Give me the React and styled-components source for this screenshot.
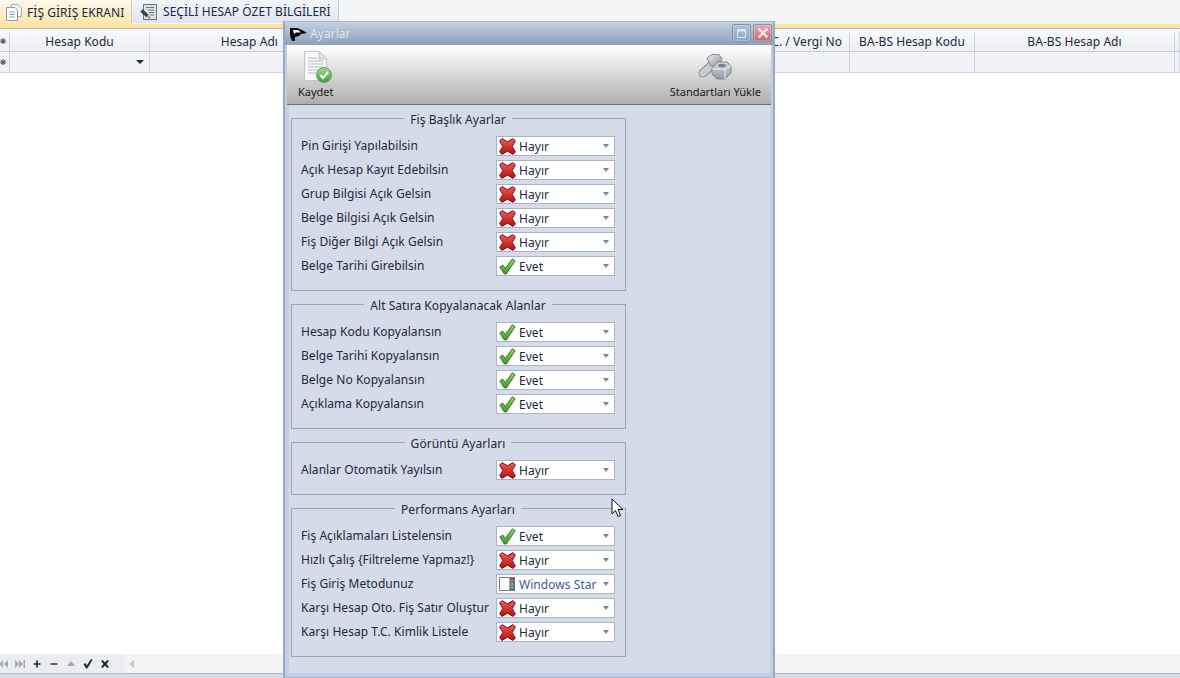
import React from 'react';
import styled, { createGlobalStyle } from 'styled-components';

const GlobalStyle = createGlobalStyle`
  html, body {
    margin: 0;
    padding: 0;
    height: 100%;
    overflow: hidden;
    background: #fff;
  }
  #root {
    height: 100%;
  }
  * {
    box-sizing: border-box;
  }
`;

const Screen = styled.div`
  position: relative;
  width: 1180px;
  height: 678px;
  display: flex;
  flex-direction: column;
  overflow: hidden;
  font-family: "Noto Sans", "Liberation Sans", sans-serif;
  font-size: 12px;
  letter-spacing: 0.05px;
  color: #20293c;
`;

const TabStrip = styled.div`
  display: flex;
  flex: none;
  height: 24px;
  background: #f4f5f7;
`;

const Tab = styled.div`
  display: flex;
  align-items: center;
  gap: 5px;
  height: ${({ $active }) => ($active ? '24px' : '23px')};
  width: ${({ $width }) => $width}px;
  padding-left: ${({ $active }) => ($active ? '6px' : '8px')};
  border-right: 1px solid #c3cbda;
  background: ${({ $active }) =>
    $active ? 'linear-gradient(#fcf9ee, #fde6aa)' : 'linear-gradient(#f3f5f9, #dfe4ee)'};
`;

const YellowBand = styled.div`
  flex: none;
  height: 5px;
  background: #fde39f;
  border-bottom: 1px solid #aeb6c6;
`;

const HeaderRow = styled.div`
  display: flex;
  flex: none;
  height: 23px;
  padding-top: 2px;
  background: linear-gradient(#f8f9fb, #eceef3);
  border-bottom: 1px solid #c6cad6;
`;

const FilterRow = styled.div`
  display: flex;
  flex: none;
  height: 21px;
  background: #f0f2f7;
  border-bottom: 1px solid #d1d5df;
`;

const Cell = styled.div`
  position: relative;
  flex: ${({ $width }) => ($width ? `0 0 ${$width}px` : '1')};
  display: flex;
  align-items: center;
  justify-content: ${({ $pad }) => ($pad ? 'flex-end' : 'center')};
  padding-right: ${({ $pad }) => $pad || 0}px;
  border-right: 1px solid #d1d5df;
  overflow: hidden;
  white-space: nowrap;
`;

const Marker = styled.span`
  margin-right: 3px;
  font-family: "DejaVu Sans", sans-serif;
  font-size: 8px;
  color: #333;
`;

const Caret = styled.span`
  position: absolute;
  right: 5px;
  top: 8px;
  border-left: 4px solid transparent;
  border-right: 4px solid transparent;
  border-top: 4px solid #20293c;
`;

const GridBody = styled.div`
  flex: 1;
  background: #fff;
`;

const Navigator = styled.div`
  display: flex;
  flex: none;
  align-items: center;
  height: 19px;
  background: #f3f4f6;
`;

const NavButtons = styled.div`
  width: 124px;
  height: 100%;
  display: flex;
  align-items: center;
  background: #ebedf1;
`;

const NavButton = styled.svg`
  flex: none;
  margin-right: 7px;
  &:first-child {
    margin-left: -1px;
  }
`;

const ScrollArrow = styled.span`
  margin-left: 5px;
  border-top: 4px solid transparent;
  border-bottom: 4px solid transparent;
  border-right: 5px solid #c8ccd3;
`;

const BottomBar = styled.div`
  flex: none;
  height: 5px;
  background: #d8dce5;
  border-top: 1px solid #aeb6c6;
`;

const Window = styled.div`
  position: absolute;
  left: 283px;
  top: 21px;
  width: 492px;
  height: 657px;
  display: flex;
  flex-direction: column;
  padding: 0 2px 3px;
  background: #c2cfe1;
  border: 1px solid #a5b6cd;
  border-left: 2px solid #98a9c2;
  border-right: 2px solid #98a9c2;
`;

const TitleBar = styled.div`
  flex: none;
  height: 23px;
  margin: 0 -2px;
  padding: 0 1px 0 5px;
  display: flex;
  align-items: center;
  gap: 2px;
  background: linear-gradient(#c3d0e1, #8da0ba);
`;

const TitleText = styled.span`
  flex: 1;
  margin-left: 1px;
  color: #dfe5ee;
`;

const WinButton = styled.span`
  width: 19px;
  height: 18px;
  margin-top: -1px;
  display: flex;
  align-items: center;
  justify-content: center;
  border: 1px solid #7f94b1;
  border-radius: 2px;
  box-shadow: inset 0 0 0 1px rgba(255, 255, 255, 0.25);
  background: ${({ $close }) =>
    $close ? 'linear-gradient(#e4a9ab, #c9646a)' : 'linear-gradient(#b0c1d7, #8fa5c3)'};
`;

const Toolbar = styled.div`
  flex: none;
  height: 60px;
  padding: 0 10px 0 11px;
  display: flex;
  justify-content: space-between;
  font-size: 11px;
  letter-spacing: 0;
  background: linear-gradient(#ffffff, #ececec 25%, #aeaeae);
  border-bottom: 1px solid #6f6f6f;
`;

const ToolButton = styled.div`
  display: flex;
  flex-direction: column;
  align-items: center;
  justify-content: flex-end;
  gap: 1px;
  padding-bottom: 5px;
  color: #15181f;
`;

const Panel = styled.div`
  flex: 1;
  min-height: 0;
  padding: 5px 0 0 2px;
  display: flex;
  flex-direction: column;
  gap: 5px;
  background: #d5dbe9;
  border: 1px solid #c6cfdf;
  border-left-width: 2px;
  border-top: none;
`;

const Group = styled.fieldset`
  flex: none;
  width: 335px;
  min-width: 0;
  margin: 0;
  padding: 8px 10px 12px 9px;
  border: 1px solid #9aa5b8;
`;

const GroupTitle = styled.legend`
  margin: 0 auto;
  padding: 0 6px;
  height: 16px;
  line-height: 19px;
`;

const Row = styled.div`
  display: flex;
  align-items: center;
  height: 24px;
  white-space: nowrap;
`;

const Label = styled.span`
  flex: 0 0 195px;
  line-height: 20px;
`;

const Combo = styled.div`
  width: 119px;
  height: 20px;
  padding: 0 5px 0 2px;
  display: flex;
  align-items: center;
  gap: 3px;
  background: #fff;
  border: 1px solid #a9b3c4;
`;

const ComboText = styled.span`
  flex: 1;
  overflow: hidden;
  color: ${({ $blue }) => ($blue ? '#3a5a9c' : '#20293c')};
`;

const ComboArrow = styled.span`
  border-left: 3.5px solid transparent;
  border-right: 3.5px solid transparent;
  border-top: 4px solid #7b8597;
`;

const Pointer = styled.svg`
  position: absolute;
  left: 611px;
  top: 498px;
`;

const CrossIcon = () => (
  <svg width="17" height="17" viewBox="0 0 17 17">
    <defs>
      <linearGradient id="cr" x1="0" y1="0" x2="0" y2="1">
        <stop offset="0" stopColor="#ee5f5a" />
        <stop offset="1" stopColor="#b50d10" />
      </linearGradient>
    </defs>
    <path
      d="M3 .6 8.500 3.800 14 .6 16.400 3 13.200 8.500 16.400 14 14 16.400 8.500 13.200 3 16.400 .6 14 3.800 8.500 .6 3Z"
      fill="url(#cr)"
      stroke="#7e0d0f"
      strokeWidth="1"
    />
  </svg>
);

const CheckIcon = () => (
  <svg width="17" height="17" viewBox="0 0 17 17">
    <defs>
      <linearGradient id="ck" x1="0" y1="0" x2="0" y2="1">
        <stop offset="0" stopColor="#8ed365" />
        <stop offset="1" stopColor="#3d9a26" />
      </linearGradient>
    </defs>
    <path
      d="M.8 9 3.700 7 6.300 10.300 13.300.8 16.200 2.800 7.300 16H5.300Z"
      fill="url(#ck)"
      stroke="#2c6e22"
      strokeWidth="0.9"
    />
  </svg>
);

const LayoutIcon = () => (
  <svg width="17" height="16" viewBox="0 0 17 16">
    <rect x="0.5" y="1.500" width="15" height="13" fill="#fff" stroke="#77818f" />
    <rect x="10.500" y="2" width="5" height="12" fill="#4b5666" />
    <rect x="11.500" y="3" width="3" height="3" fill="#d8694f" />
    <rect x="11.500" y="6.500" width="3" height="3" fill="#7cc35a" />
    <rect x="11.500" y="10" width="3" height="3" fill="#63a9c9" />
  </svg>
);

const PageIcon = () => (
  <svg width="16" height="17" viewBox="0 0 16 17">
    <path d="M5.500.5H12L15.500 4V12.500H5.500Z" fill="#fbfbfb" stroke="#9aa5b5" />
    <path d="M.5 3.500H9L11.500 6V16.500H.5Z" fill="#fff" stroke="#8f98a6" />
    <path d="M3 8H9M3 10.500H9M3 13H9" stroke="#8ea2bd" />
  </svg>
);

const SummaryIcon = () => (
  <svg width="18" height="18" viewBox="0 0 18 18">
    <rect x="3.500" y="1.500" width="13" height="15" fill="#dbe2e4" stroke="#68727e" />
    <path d="M6 4.500H14M8 7H14M9 9.500H14M10 12H14" stroke="#5f7f78" />
    <path d="M1.500 7.500 7.500 13" stroke="#3c4148" strokeWidth="3.500" />
    <path d="M8 13.500 10 15" stroke="#8a9098" strokeWidth="2" />
  </svg>
);

const FlagIcon = () => (
  <svg width="17" height="14" viewBox="0 0 17 14">
    <path d="M0 1H7L12 3 17 6 11 7 9 9 5 10V14H2L0 9Z" fill="#08090b" />
    <path d="M3 3H8L11 5.500H6L4 7Z" fill="#f0f2f5" />
  </svg>
);

const SaveIcon = () => (
  <svg width="32" height="33" viewBox="0 0 32 33">
    <defs>
      <linearGradient id="sv" x1="0" y1="0" x2="0" y2="1">
        <stop offset="0" stopColor="#a5d987" />
        <stop offset="1" stopColor="#3e9c44" />
      </linearGradient>
    </defs>
    <path d="M4.500 1.500H19L26.500 9V30.500H4.500Z" fill="#f8f9fa" stroke="#c2c6cc" />
    <path d="M19 1.500V9H26.500Z" fill="#dde0e5" stroke="#c2c6cc" />
    <path d="M8 8H17M8 11H23M8 14H23M8 17H23M8 20H20M8 23H16" stroke="#b2b8c2" />
    <circle cx="24" cy="25" r="7.500" fill="url(#sv)" stroke="#5f9f68" />
    <path d="M20.500 25 23 28 28 22" fill="none" stroke="#fff" strokeWidth="2.200" />
  </svg>
);

const BoltIcon = () => (
  <svg width="34" height="29" viewBox="0 0 34 29">
    <defs>
      <linearGradient id="bt" x1="0" y1="0" x2="1" y2="1">
        <stop offset="0" stopColor="#eef1f4" />
        <stop offset="1" stopColor="#8a9099" />
      </linearGradient>
      <linearGradient id="nt" x1="0" y1="0" x2="0" y2="1">
        <stop offset="0" stopColor="#d9dce0" />
        <stop offset="1" stopColor="#9499a1" />
      </linearGradient>
    </defs>
    <path d="M5 19 14 11" stroke="#858a92" strokeWidth="9" strokeLinecap="round" />
    <path d="M5 19 14 11" stroke="#c9cdd3" strokeWidth="7" strokeLinecap="round" />
    <path d="M9 4 14 .5H21L24 5 21 11 13 12Z" fill="url(#bt)" stroke="#858a92" />
    <path d="M14 14 20 8H29L33 12V19L27 25H19L14 20Z" fill="url(#nt)" stroke="#7c8189" />
    <path d="M14 15H27L33 12M27 15V25" fill="none" stroke="#eceef1" />
    <ellipse cx="24" cy="11.500" rx="4" ry="1.800" fill="#7b8088" />
  </svg>
);

const MaximizeIcon = () => (
  <svg width="11" height="11" viewBox="0 0 11 11">
    <rect x="1.500" y="1.500" width="8" height="8" fill="none" stroke="#dfe8f2" />
    <path d="M1 2.500H10" stroke="#dfe8f2" strokeWidth="2" />
  </svg>
);

const CloseIcon = () => (
  <svg width="12" height="12" viewBox="0 0 12 12">
    <path d="M1.500 1.500 10.500 10.500M10.500 1.500 1.500 10.500" stroke="#f3dede" strokeWidth="2.600" />
  </svg>
);

const navIcons = [
  { width: 9, d: 'M4 1V9L0 5ZM9 1V9L5 5Z', fill: '#a3a8b2' },
  { width: 10, d: 'M0 1V9L4 5ZM4 1V9L8 5ZM8.500 1H10V9H8.500Z', fill: '#a3a8b2' },
  { width: 10, d: 'M4.200 1.500H5.800V4.200H8.500V5.800H5.800V8.500H4.200V5.800H1.500V4.200H4.200Z', fill: '#20293c' },
  { width: 10, d: 'M1.500 4.300H8.500V5.700H1.500Z', fill: '#20293c' },
  { width: 10, d: 'M5 2 9 7H1Z', fill: '#a3a8b2' },
  { width: 10, d: 'M.5 5 2.500 4 3.800 6.500 8 0 9.500 1 4.300 9.500H3Z', fill: '#20293c' },
  { width: 10, d: 'M1 2 2.700 1 5 3.500 7.300 1 9 2 6.500 5 9 8 7.300 9 5 6.500 2.700 9 1 8 3.500 5Z', fill: '#20293c' },
];

const icons = { no: CrossIcon, yes: CheckIcon, layout: LayoutIcon };
const comboText = { no: 'Hayır', yes: 'Evet', layout: 'Windows Star' };

const groups = [
  {
    title: 'Fiş Başlık Ayarlar',
    rows: [
      ['Pin Girişi Yapılabilsin', 'no'],
      ['Açık Hesap Kayıt Edebilsin', 'no'],
      ['Grup Bilgisi Açık Gelsin', 'no'],
      ['Belge Bilgisi Açık Gelsin', 'no'],
      ['Fiş Diğer Bilgi Açık Gelsin', 'no'],
      ['Belge Tarihi Girebilsin', 'yes'],
    ],
  },
  {
    title: 'Alt Satıra Kopyalanacak Alanlar',
    rows: [
      ['Hesap Kodu Kopyalansın', 'yes'],
      ['Belge Tarihi Kopyalansın', 'yes'],
      ['Belge No Kopyalansın', 'yes'],
      ['Açıklama Kopyalansın', 'yes'],
    ],
  },
  {
    title: 'Görüntü Ayarları',
    rows: [['Alanlar Otomatik Yayılsın', 'no']],
  },
  {
    title: 'Performans Ayarları',
    rows: [
      ['Fiş Açıklamaları Listelensin', 'yes'],
      ['Hızlı Çalış {Filtreleme Yapmaz!}', 'no'],
      ['Fiş Giriş Metodunuz', 'layout'],
      ['Karşı Hesap Oto. Fiş Satır Oluştur', 'no'],
      ['Karşı Hesap T.C. Kimlik Listele', 'no'],
    ],
  },
];

const columns = [
  { width: 10, marker: true },
  { width: 140, text: 'Hesap Kodu', caret: true },
  { width: 140, text: 'Hesap Adı', pad: 11 },
  { width: 560, text: 'T.C. / Vergi No', pad: 7 },
  { width: 125, text: 'BA-BS Hesap Kodu' },
  { width: 200, text: 'BA-BS Hesap Adı' },
  { text: '' },
];

const SettingRow = ({ label, value }) => {
  const Icon = icons[value];
  return (
    <Row>
      <Label>{label}</Label>
      <Combo>
        <Icon />
        <ComboText $blue={value === 'layout'}>{comboText[value]}</ComboText>
        <ComboArrow />
      </Combo>
    </Row>
  );
};

const App = () => (
  <Screen>
    <GlobalStyle />
    <TabStrip>
      <Tab $active $width={132}>
        <PageIcon />
        FİŞ GİRİŞ EKRANI
      </Tab>
      <Tab $width={207}>
        <SummaryIcon />
        SEÇİLİ HESAP ÖZET BİLGİLERİ
      </Tab>
    </TabStrip>
    <YellowBand />
    <HeaderRow>
      {columns.map((col, index) => (
        <Cell key={`head_${index}`} $width={col.width} $pad={col.pad}>
          {col.marker && <Marker>❋</Marker>}
          {col.text}
        </Cell>
      ))}
    </HeaderRow>
    <FilterRow>
      {columns.map((col, index) => (
        <Cell key={`filter_${index}`} $width={col.width}>
          {col.marker && <Marker>❋</Marker>}
          {col.caret && <Caret />}
        </Cell>
      ))}
    </FilterRow>
    <GridBody />
    <Navigator>
      <NavButtons>
        {navIcons.map((icon, index) => (
          <NavButton key={`nav_${index}`} width={icon.width} height="10" viewBox={`0 0 ${icon.width} 10`}>
            <path d={icon.d} fill={icon.fill} />
          </NavButton>
        ))}
      </NavButtons>
      <ScrollArrow />
    </Navigator>
    <BottomBar />

    <Window>
      <TitleBar>
        <FlagIcon />
        <TitleText>Ayarlar</TitleText>
        <WinButton>
          <MaximizeIcon />
        </WinButton>
        <WinButton $close>
          <CloseIcon />
        </WinButton>
      </TitleBar>
      <Toolbar>
        <ToolButton>
          <SaveIcon />
          Kaydet
        </ToolButton>
        <ToolButton>
          <BoltIcon />
          Standartları Yükle
        </ToolButton>
      </Toolbar>
      <Panel>
        {groups.map((group) => (
          <Group key={group.title}>
            <GroupTitle>{group.title}</GroupTitle>
            {group.rows.map(([label, value]) => (
              <SettingRow key={label} label={label} value={value} />
            ))}
          </Group>
        ))}
      </Panel>
    </Window>

    <Pointer width="14" height="20" viewBox="0 0 14 20">
      <path d="M1 1V16L4.500 12.500 7 18.500 9.500 17.500 7 11.500H12Z" fill="#fff" stroke="#111" />
    </Pointer>
  </Screen>
);

export default App;
